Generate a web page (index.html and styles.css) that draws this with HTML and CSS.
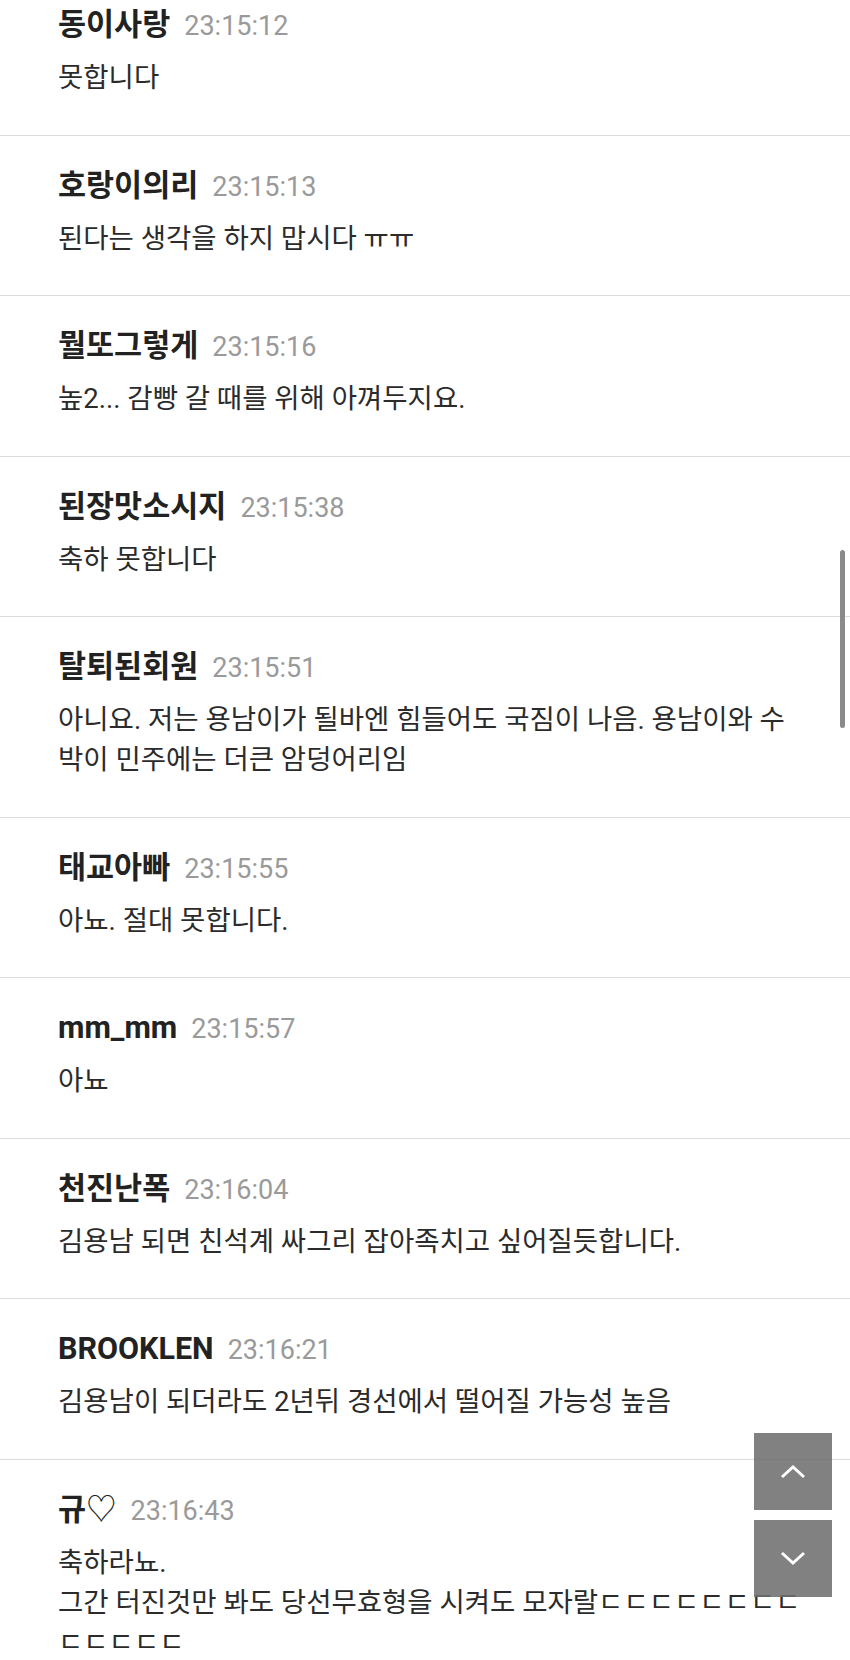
FILE: index.html
```html
<!DOCTYPE html>
<html lang="ko">
<head>
    <meta charset="UTF-8">
    <meta name="viewport" content="width=device-width, initial-scale=1.0">
    <title>댓글</title>
    <link rel="stylesheet" href="styles.css">
</head>
<body>
    <ul class="comments">
        <li class="comment">
            <div class="meta"><span class="nick">동이사랑</span><span class="time">23:15:12</span></div>
            <p class="text">못합니다</p>
        </li>
        <li class="comment">
            <div class="meta"><span class="nick">호랑이의리</span><span class="time">23:15:13</span></div>
            <p class="text">된다는 생각을 하지 맙시다 ㅠㅠ</p>
        </li>
        <li class="comment">
            <div class="meta"><span class="nick">뭘또그렇게</span><span class="time">23:15:16</span></div>
            <p class="text">높2... 감빵 갈 때를 위해 아껴두지요.</p>
        </li>
        <li class="comment">
            <div class="meta"><span class="nick">된장맛소시지</span><span class="time">23:15:38</span></div>
            <p class="text">축하 못합니다</p>
        </li>
        <li class="comment">
            <div class="meta"><span class="nick">탈퇴된회원</span><span class="time">23:15:51</span></div>
            <p class="text">아니요. 저는 용남이가 될바엔 힘들어도 국짐이 나음. 용남이와 수박이 민주에는 더큰 암덩어리임</p>
        </li>
        <li class="comment">
            <div class="meta"><span class="nick">태교아빠</span><span class="time">23:15:55</span></div>
            <p class="text">아뇨. 절대 못합니다.</p>
        </li>
        <li class="comment">
            <div class="meta"><span class="nick">mm_mm</span><span class="time">23:15:57</span></div>
            <p class="text">아뇨</p>
        </li>
        <li class="comment">
            <div class="meta"><span class="nick">천진난폭</span><span class="time">23:16:04</span></div>
            <p class="text">김용남 되면 친석계 싸그리 잡아족치고 싶어질듯합니다.</p>
        </li>
        <li class="comment">
            <div class="meta"><span class="nick">BROOKLEN</span><span class="time">23:16:21</span></div>
            <p class="text">김용남이 되더라도 2년뒤 경선에서 떨어질 가능성 높음</p>
        </li>
        <li class="comment">
            <div class="meta"><span class="nick">규<span class="heart">♡</span></span><span class="time">23:16:43</span></div>
            <p class="text">축하라뇨.<br>그간 터진것만 봐도 당선무효형을 시켜도 모자랄ㄷㄷㄷㄷㄷㄷㄷㄷㄷㄷㄷㄷㄷ</p>
        </li>
    </ul>

    <div class="scrollbar"></div>

    <div class="nav-buttons">
        <button class="nav-btn" aria-label="위로">
            <svg width="26" height="15" viewBox="0 0 26 15"><polyline points="2,13 13,3 24,13" fill="none" stroke="#fff" stroke-width="3"/></svg>
        </button>
        <button class="nav-btn" aria-label="아래로">
            <svg width="26" height="15" viewBox="0 0 26 15"><polyline points="2,2 13,12 24,2" fill="none" stroke="#fff" stroke-width="3"/></svg>
        </button>
    </div>
</body>
</html>
```

FILE: styles.css
```css
body {
    margin: 0;
    background-color: #fff;
    font-family: Roboto, "Noto Sans CJK KR", sans-serif;
    color: #2b2b2b;
    overflow: hidden;
}

.comments {
    list-style: none;
    margin: -25px 0 0 0;
    padding: 0;
}

.comment {
    padding: 30px 44px 36.5px 58px;
    border-bottom: 1px solid #dcdcdc;
}

.meta {
    display: flex;
    align-items: baseline;
    gap: 14px;
    height: 40px;
    line-height: 40px;
}

.nick {
    font-size: 30.5px;
    font-weight: bold;
    color: #222;
}

.heart {
    font-weight: normal;
}

.time {
    font-size: 27px;
    color: #9a9a9a;
}

.text {
    margin: 13px 0 0 0;
    font-size: 27.5px;
    line-height: 40px;
}

.scrollbar {
    position: fixed;
    top: 550px;
    right: 5px;
    width: 5px;
    height: 178px;
    border-radius: 3px;
    background-color: #8a8a8a;
}

.nav-buttons {
    position: fixed;
    right: 18px;
    top: 1433px;
    display: flex;
    flex-direction: column;
    gap: 10px;
}

.nav-btn {
    width: 78px;
    height: 77px;
    border: none;
    padding: 0;
    background-color: rgba(112, 112, 112, 0.88);
    display: flex;
    align-items: center;
    justify-content: center;
    cursor: pointer;
}
```
